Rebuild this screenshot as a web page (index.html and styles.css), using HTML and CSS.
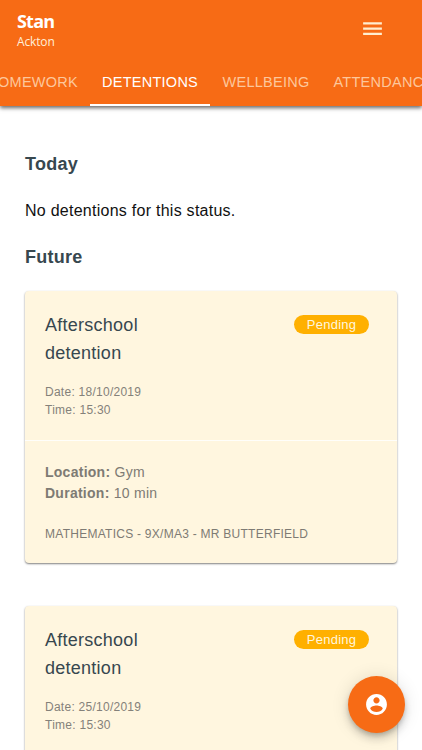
FILE: index.html
```html
<!DOCTYPE html>
<html lang="en">
<head>
    <meta charset="UTF-8">
    <meta name="viewport" content="width=device-width, initial-scale=1.0">
    <title>Detentions</title>
    <link rel="stylesheet" href="styles.css">
</head>
<body>
    <header class="app-bar">
        <div class="top-row">
            <div class="student">
                <div class="first-name">Stan</div>
                <div class="last-name">Ackton</div>
            </div>
            <button class="menu-button" aria-label="Menu">
                <svg viewBox="0 0 24 24" width="25" height="25"><path fill="currentColor" d="M3 18.200h18v-2.200H3v2.200zm0-5h18V11H3v2.200zM3 6v2.200h18V6H3z"/></svg>
            </button>
        </div>
        <nav class="tabs">
            <a class="tab">HOMEWORK</a>
            <a class="tab active">DETENTIONS</a>
            <a class="tab">WELLBEING</a>
            <a class="tab">ATTENDANCE</a>
        </nav>
    </header>

    <main class="content">
        <h2>Today</h2>
        <p class="empty">No detentions for this status.</p>
        <h2>Future</h2>

        <article class="card">
            <div class="card-head">
                <div class="title-row">
                    <h3>Afterschool detention</h3>
                    <span class="badge">Pending</span>
                </div>
                <div class="when">Date: 18/10/2019<br>Time: 15:30</div>
            </div>
            <div class="card-body">
                <div class="details"><b>Location:</b> Gym<br><b>Duration:</b> 10 min</div>
                <div class="lesson">MATHEMATICS - 9X/MA3 - MR BUTTERFIELD</div>
            </div>
        </article>

        <article class="card">
            <div class="card-head">
                <div class="title-row">
                    <h3>Afterschool detention</h3>
                    <span class="badge">Pending</span>
                </div>
                <div class="when">Date: 25/10/2019<br>Time: 15:30</div>
            </div>
        </article>
    </main>

    <button class="fab" aria-label="Account">
        <svg viewBox="0 0 24 24" width="25" height="25"><path fill="currentColor" d="M12 2C6.480 2 2 6.480 2 12s4.480 10 10 10 10-4.480 10-10S17.520 2 12 2zm0 3c1.660 0 3 1.340 3 3s-1.340 3-3 3-3-1.340-3-3 1.340-3 3-3zm0 14.200c-2.500 0-4.710-1.280-6-3.220.030-1.990 4-3.080 6-3.080 1.990 0 5.970 1.090 6 3.080-1.290 1.940-3.500 3.220-6 3.220z"/></svg>
    </button>
</body>
</html>
```
FILE: styles.css
```css
* { box-sizing: border-box; }
body { margin: 0; height: 750px; overflow: hidden; background: #fff; color: #111; font-family: "Liberation Sans", Arial, sans-serif; font-size: 16px; letter-spacing: 0.26px; }
button { border: none; padding: 0; cursor: pointer; }
svg { display: block; }

.app-bar { position: relative; height: 106px; background: #f76b15; color: #fff; box-shadow: 0 2px 4px rgba(0,0,0,0.6); }
.top-row { display: flex; justify-content: space-between; height: 58px; padding: 10px 37px 0 17px; }
.student { font-family: "Open Sans", "Segoe UI", sans-serif; }
.first-name { font-size: 18px; font-weight: 700; line-height: 23px; letter-spacing: -0.8px; }
.last-name { font-size: 12px; line-height: 18px; letter-spacing: -0.15px; color: #ffeed8; }
.menu-button { height: 25px; margin-top: 6px; background: none; color: #ffeed0; }
.tabs { display: flex; height: 48px; margin-left: -22px; overflow: hidden; }
.tab { flex: none; padding: 0 12px; font-size: 14.5px; line-height: 48px; color: #fdc79c; }
.tab:first-child { width: 112px; display: flex; justify-content: flex-end; }
.tab.active { width: 120px; color: #fff; border-bottom: 2px solid #fff; }
.tab.active + .tab { width: 111.5px; padding-right: 0; padding-left: 12.5px; }

.content { padding: 46px 25px 0; }
h2 { margin: 0; font-size: 18px; line-height: 24px; color: #37474f; }
.empty { margin: 22px 0; line-height: 25px; }

.card { margin: 22px 0 43px; background: #fff6df; border-radius: 4px; box-shadow: 0 1px 2px rgba(0,0,0,0.5); }
.card-head { height: 150px; padding: 20px 28px 0 20px; border-bottom: 1px solid #fffefa; }
.title-row { display: flex; justify-content: space-between; align-items: flex-start; }
h3 { width: 130px; margin: 1px 0 0; font-size: 18px; font-weight: 400; line-height: 27.5px; color: #37474f; }
.badge { width: 75px; height: 19px; margin-top: 4px; border-radius: 10px; background: #ffb000; color: #fff6df; font-size: 13px; line-height: 20px; text-align: center; }
.when { margin-top: 16px; font-size: 12px; line-height: 18px; color: #84817a; }
.card-body { height: 122px; padding: 21px 20px; color: #7e7b74; }
.details { font-size: 14px; line-height: 21px; }
.lesson { margin-top: 21px; font-size: 12px; line-height: 18px; white-space: nowrap; }

/* floating account button */
.fab { position: fixed; right: 17px; bottom: 17px; width: 57px; height: 57px; display: flex; align-items: center; justify-content: center; border-radius: 50%; background: #f76b15; color: #fff; box-shadow: 0 3px 5px -1px rgba(0,0,0,0.2), 0 6px 10px rgba(0,0,0,0.14), 0 1px 18px rgba(0,0,0,0.12); }
```
